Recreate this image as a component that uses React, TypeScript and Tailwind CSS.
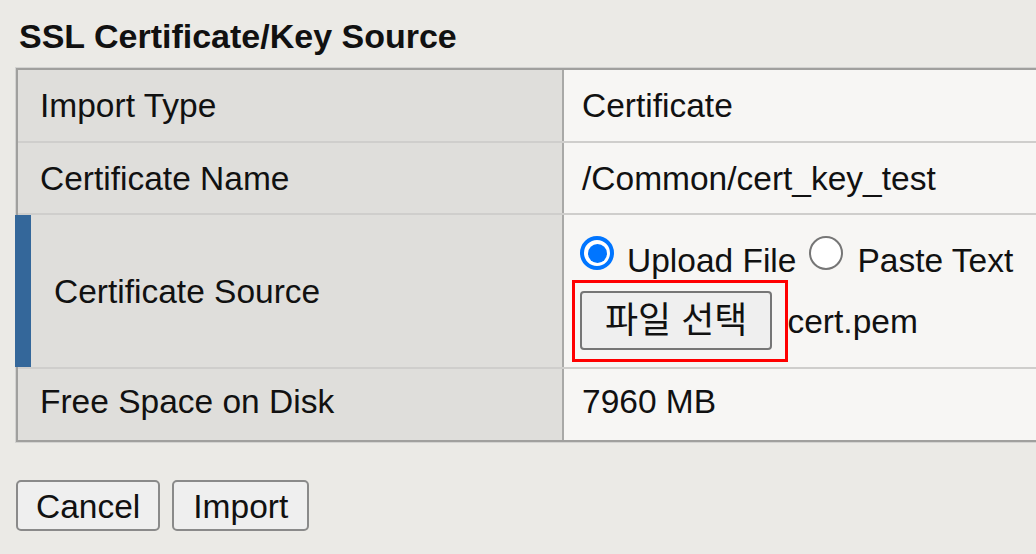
const font = { fontFamily: '"Liberation Sans", Arial, "Noto Sans CJK KR", sans-serif' };

function Radio({ checked, className = '' }: { checked?: boolean; className?: string }) {
  if (checked) {
    return (
      <span
        className={`mb-[7px] flex h-[34px] w-[34px] shrink-0 items-center justify-center rounded-full border-[4px] border-[#0075ff] bg-white ${className}`}
      >
        <span className="block h-[19px] w-[19px] rounded-full bg-[#0075ff]" />
      </span>
    );
  }
  return (
    <span
      className={`mb-[7px] block h-[34px] w-[34px] shrink-0 rounded-full border-2 border-[#767676] bg-white ${className}`}
    />
  );
}

function Row({
  label,
  children,
  height,
  last,
  accent,
}: {
  label: string;
  children: React.ReactNode;
  height: string;
  last?: boolean;
  accent?: boolean;
}) {
  const pad = last ? 'pb-[6px]' : '';
  return (
    <div className={`relative flex ${height} ${last ? '' : 'border-b-2 border-[#cfcecc]'}`}>
      {accent && <div className="absolute left-[-3px] top-0 bottom-0 w-[16px] bg-[#34679a]" />}
      <div
        className={`flex w-[546px] shrink-0 items-center border-r-2 border-[#a9a9a7] bg-[#dfdedb] ${pad} ${
          accent ? 'pl-[36px]' : 'pl-[22px]'
        }`}
      >
        {label}
      </div>
      <div className={`flex flex-1 items-center bg-[#f7f6f4] pl-[18px] ${pad}`}>{children}</div>
    </div>
  );
}

export default function App() {
  return (
    <div
      className="h-[554px] w-[1036px] overflow-hidden bg-[#ebeae6] pl-[15px] text-[33.5px] leading-[33px] text-[#111]"
      style={font}
    >
      <div className="pl-[4px] pt-[20px] text-[34px] font-bold">SSL Certificate/Key Source</div>

      <div className="mt-[14px] w-[1100px] border border-[#d3d3d1]">
        <div className="border-2 border-[#a0a09e] bg-[#f7f6f4]">
          <Row label="Import Type" height="h-[73px]">
            Certificate
          </Row>
          <Row label="Certificate Name" height="h-[72px]">
            /Common/cert_key_test
          </Row>
          <Row label="Certificate Source" height="h-[154px]" accent>
            <div className="relative flex h-full flex-col pt-[21px]">
              <div className="flex items-end">
                <Radio checked className="ml-[-2px]" />
                <span className="ml-[13px]">Upload File</span>
                <Radio className="ml-[13px]" />
                <span className="ml-[14px]">Paste Text</span>
              </div>
              <div className="mt-[14px] flex items-baseline">
                <button
                  className="ml-[-2px] rounded-[4px] border-2 border-[#767676] bg-[#efefef] px-[23px] py-[10px] text-[36px] leading-[35px] text-[#111]"
                  style={font}
                >
                  파일 선택
                </button>
                <span className="ml-[15px]">cert.pem</span>
              </div>
              <div className="pointer-events-none absolute left-[-10px] top-[65px] h-[82px] w-[216px] border-[3px] border-[#ff0000]" />
            </div>
          </Row>
          <Row label="Free Space on Disk" height="h-[71px]" last>
            7960 MB
          </Row>
        </div>
      </div>

      <div className="mt-[37px] flex gap-[12px] pl-[1px]">
        <button
          className="rounded-[5px] border-2 border-[#8a8a8a] bg-[#efefef] px-[18px] pt-[8px] pb-[6px] text-[33.5px] leading-[33px] text-[#111]"
          style={font}
        >
          Cancel
        </button>
        <button
          className="rounded-[5px] border-2 border-[#8a8a8a] bg-[#efefef] px-[19px] pt-[8px] pb-[6px] text-[33.5px] leading-[33px] text-[#111]"
          style={font}
        >
          Import
        </button>
      </div>
    </div>
  );
}
